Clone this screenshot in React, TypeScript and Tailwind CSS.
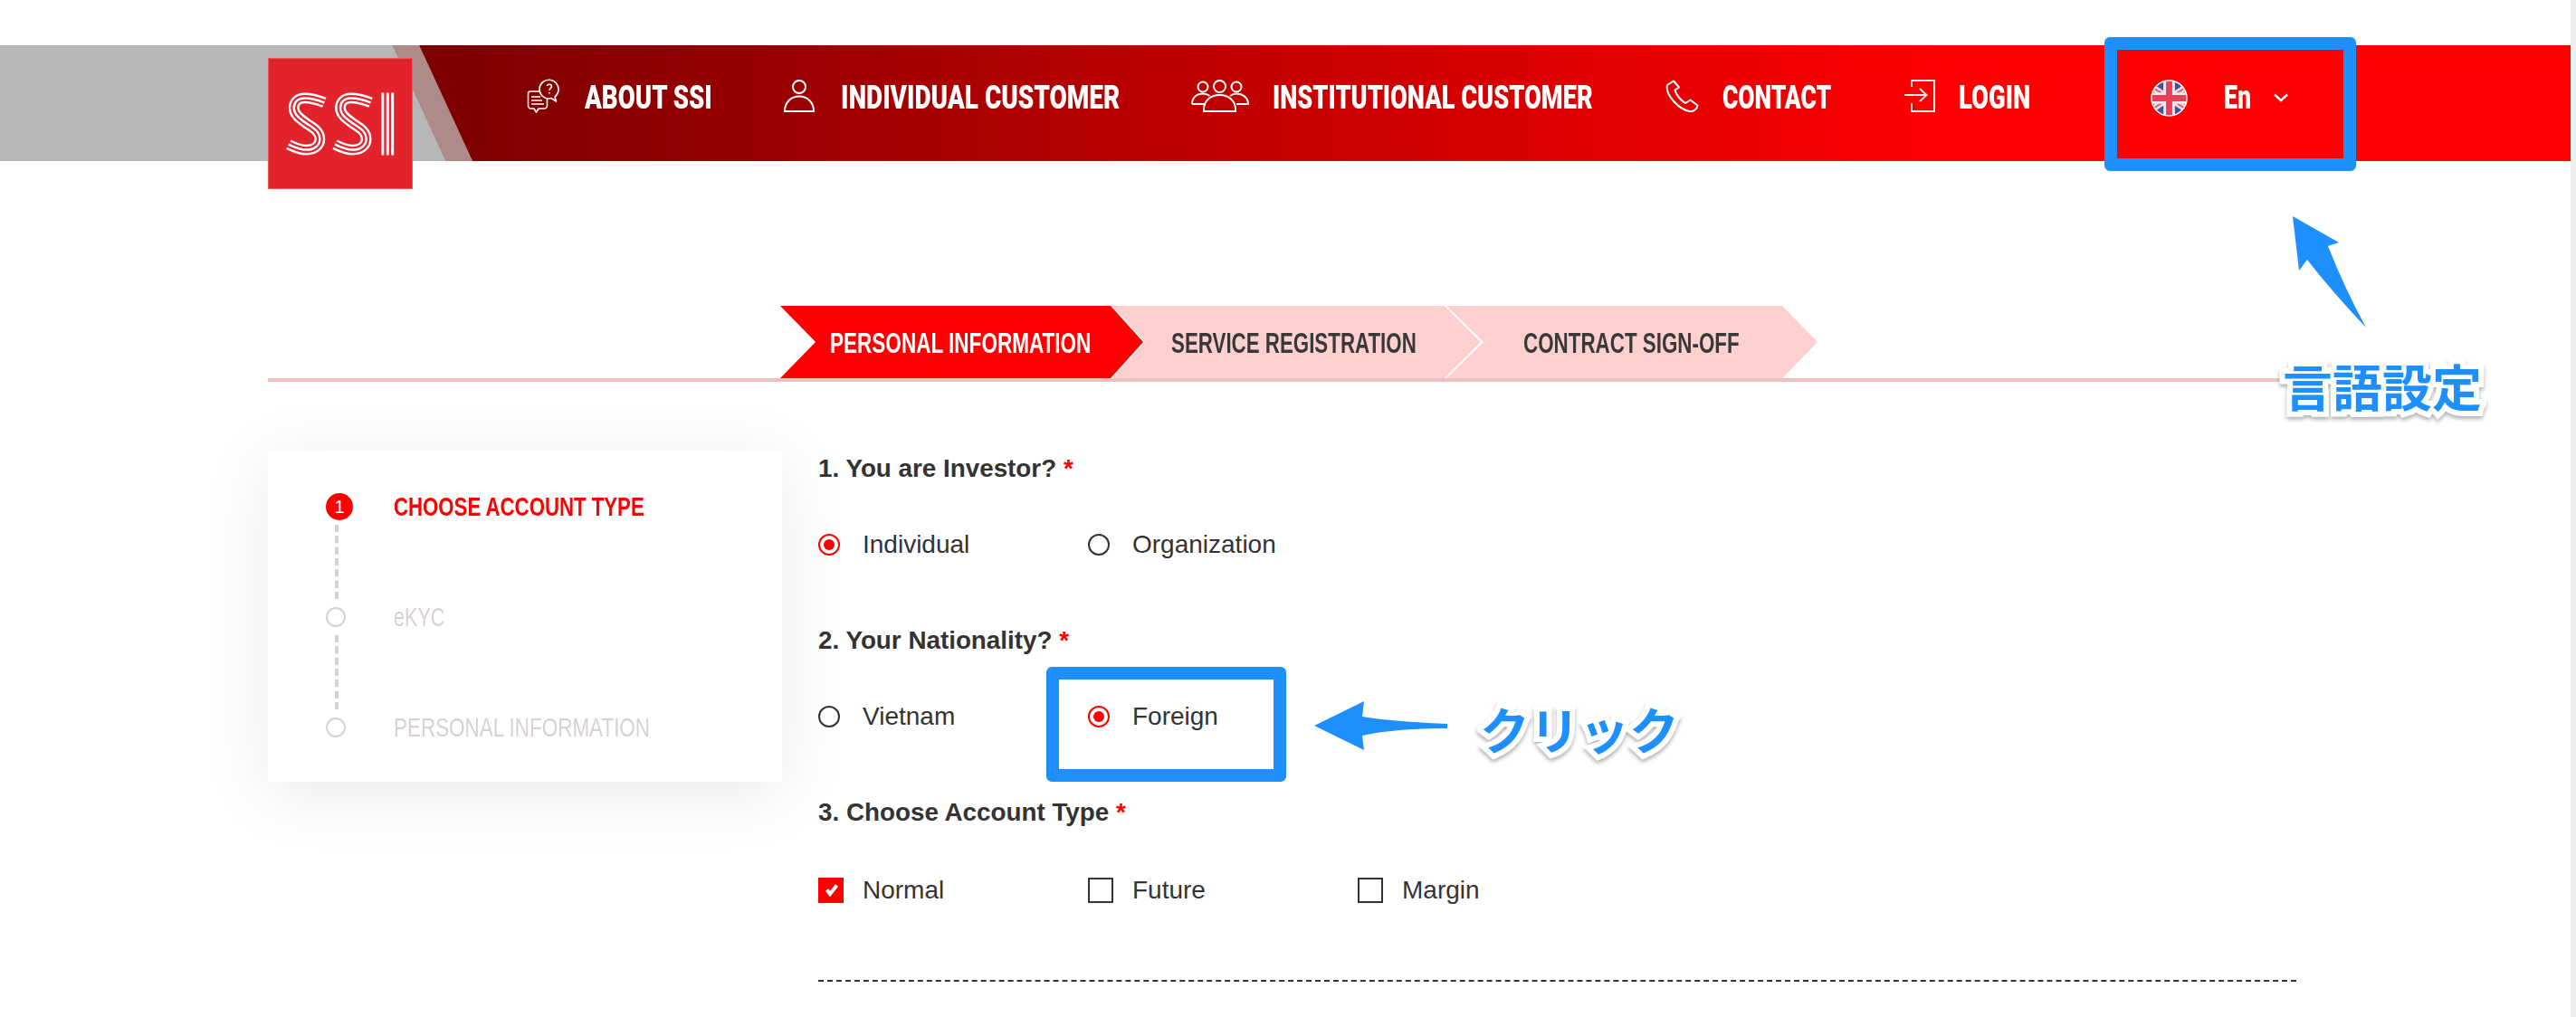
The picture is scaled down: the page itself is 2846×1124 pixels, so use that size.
import type { ReactNode } from "react";

const sans = "[font-family:'Liberation_Sans',Arial,sans-serif]";

function SsiLogo() {
  const s = "M62 49C52 45 44 44 40 44C32 44 28 49 28 55C28 63 36 68 43 73C51 78 57 82 57 90C57 97 51 102 42 102C35 102 28 99 22 96";
  return (
    <svg viewBox="0 0 160 145" className="h-full w-full" fill="none" strokeLinecap="butt">
      {[0, 52].map((dx) => (
        <g key={dx} transform={`translate(${dx} 0)`}>
          <path d={s} stroke="#fff" strokeWidth="12" />
          <path d={s} stroke="#e2232b" strokeWidth="7" />
          <path d={s} stroke="#fff" strokeWidth="2.5" />
        </g>
      ))}
      <path d="M127.5 38V108M133 38V108M138.5 38V108" stroke="#fff" strokeWidth="3" />
    </svg>
  );
}

function AboutIcon() {
  return (
    <svg viewBox="0 0 36 38" className="h-[38px] w-[36px]" fill="none" stroke="#fff" strokeWidth="1.6" strokeLinejoin="round">
      <path d="M17 19A10.5 10.5 0 1 1 31 20L32.5 25L27 21.5A10.5 10.5 0 0 1 17 19Z" />
      <path d="M22.5 8C22.7 5.5 27.5 5.5 27.5 8.500C27.5 10.500 25 10.500 25 13M25 15V16.500" />
      <path d="M14 14H4Q1.500 14 1.500 16.500V29Q1.500 33 5 33H8L10.500 37L13 33H19Q22.500 33 22.500 29V22" />
      <path d="M5 20H15M5 24H17M5 28H19" />
    </svg>
  );
}

function PersonIcon() {
  return (
    <svg viewBox="0 0 34 36" className="h-[36px] w-[34px]" fill="none" stroke="#fff" strokeWidth="2">
      <circle cx="17" cy="8" r="7" />
      <path d="M1 35C1 25 8 18.500 17 18.500C26 18.500 33 25 33 35Z" />
    </svg>
  );
}

function GroupIcon() {
  return (
    <svg viewBox="0 0 64 36" className="h-[36px] w-[64px]" fill="none" stroke="#fff" strokeWidth="2">
      <circle cx="31.500" cy="7.500" r="6.500" />
      <circle cx="13" cy="8" r="5.500" />
      <circle cx="50" cy="8" r="5.500" />
      <path d="M14 35V33C14 23 22 17 31.500 17C41 17 49 23 49 33V35Z" />
      <path d="M1 27C1 20 6 15.500 13 15.500C16 15.500 18.500 16.500 20.500 18M43 18C45 16.500 47 15.500 50 15.500C57 15.500 63 20 63 27H50" />
      <path d="M1 27H14" />
    </svg>
  );
}

function PhoneIcon() {
  return (
    <svg viewBox="0 0 37 36" className="h-[36px] w-[37px]" fill="none" stroke="#fff" strokeWidth="2" strokeLinejoin="round">
      <path d="M9 1.500L2 6C-0.500 16 14 33 27 35C31 35.500 35 32.500 35.500 28.500L27.500 22.500L22 26C17 23 11.500 16.500 10.500 11.500L15 8.500Z" />
    </svg>
  );
}

function LoginIcon() {
  return (
    <svg viewBox="0 0 36 36" className="h-[36px] w-[36px]" fill="none" stroke="#ffe4e4" strokeWidth="2">
      <path d="M8 8V1H33V35H8V26" />
      <path d="M0 17H24M17 10L24.500 17L17 24" />
    </svg>
  );
}

function FlagIcon() {
  return (
    <svg viewBox="0 0 42 42" className="h-[41px] w-[41px]">
      <defs>
        <clipPath id="flag-circle">
          <circle cx="21" cy="21" r="20" />
        </clipPath>
      </defs>
      <g clipPath="url(#flag-circle)">
        <rect width="42" height="42" fill="#46509f" />
        <path d="M-2 6L44 36M44 6L-2 36" stroke="#e9dfe6" strokeWidth="7" />
        <path d="M-2 6L44 36M44 6L-2 36" stroke="#e8566f" strokeWidth="2" />
        <path d="M21 0V42M0 21H42" stroke="#f0e6ea" strokeWidth="13" />
        <path d="M21 0V42M0 21H42" stroke="#ea3f5b" strokeWidth="7" />
      </g>
      <circle cx="21" cy="21" r="20" fill="none" stroke="#fff" strokeWidth="1.500" />
    </svg>
  );
}

function NavItem({ box, iconBox, icon, label, labelClass }: { box: string; iconBox: string; icon: ReactNode; label: string; labelClass: string }) {
  return (
    <div className={`flex items-center ${box}`}>
      <span className={`-mt-[4px] flex shrink-0 ${iconBox}`}>{icon}</span>
      <span className={`inline-block origin-left whitespace-nowrap font-black text-[36px] leading-none text-white [font-family:Roboto,sans-serif] ${labelClass}`}>
        {label}
      </span>
    </div>
  );
}

function Step({ pad, label, labelClass }: { pad: string; label: string; labelClass: string }) {
  return (
    <div className={`flex h-[80px] items-center pt-[2px] ${pad}`}>
      <span className={`inline-block origin-left whitespace-nowrap text-[31px] font-bold leading-none ${sans} ${labelClass}`}>{label}</span>
    </div>
  );
}

function Question({ children }: { children: ReactNode }) {
  return (
    <div className="h-[30px] text-[27.8px] font-bold leading-[30px] text-[#333]">
      {children} <span className="text-[#f00]">*</span>
    </div>
  );
}

function Radio({ label, checked = false }: { label: string; checked?: boolean }) {
  return (
    <div className="flex w-[298px] items-center">
      <span className={`mr-[25px] flex h-[24px] w-[24px] items-center justify-center rounded-full border-2 ${checked ? "border-[#f00]" : "border-[#333]"}`}>
        {checked && <span className="h-[12px] w-[12px] rounded-full bg-[#f00]" />}
      </span>
      <span className="text-[28px] leading-[30px] text-[#333]">{label}</span>
    </div>
  );
}

function Check({ label, checked = false }: { label: string; checked?: boolean }) {
  return (
    <div className="flex w-[298px] items-center">
      <span className={`mr-[21px] flex h-[28px] w-[28px] items-center justify-center border-2 ${checked ? "border-[#f00] bg-[#f00]" : "border-[#333]"}`}>
        {checked && (
          <svg viewBox="2 2 24 24" className="h-[24px] w-[24px]" fill="none" stroke="#fff" strokeWidth="4">
            <path d="M9.500 13.500L13 18L20.500 8.500" />
          </svg>
        )}
      </span>
      <span className="text-[28px] leading-[30px] text-[#333]">{label}</span>
    </div>
  );
}

function SideStep({ active = false, label, labelClass }: { active?: boolean; label: string; labelClass: string }) {
  return (
    <div className="flex h-[30px] items-center">
      <span className="flex w-[75px] shrink-0">
        {active ? (
          <span className={`flex h-[30px] w-[30px] items-center justify-center rounded-full bg-[#f00] text-[20px] text-white ${sans}`}>1</span>
        ) : (
          <span className="h-[22px] w-[22px] rounded-full border-2 border-[#d9d0d2]" />
        )}
      </span>
      <span className={`inline-block origin-left whitespace-nowrap text-[30px] leading-none ${sans} ${labelClass}`}>{label}</span>
    </div>
  );
}

function Connector() {
  return (
    <div className="h-[92px] py-[5px] pl-[10px]">
      <div className="h-full border-l-4 border-dashed border-[#d9d0d2]" />
    </div>
  );
}

const calloutText =
  "font-bold leading-none text-[#1e8fff] [font-family:'Noto_Sans_CJK_JP',sans-serif] text-[55px] [-webkit-text-stroke:12px_#fff] [paint-order:stroke_fill] drop-shadow-[0_3px_2px_rgba(0,0,0,0.3)]";

export default function App() {
  return (
    <div className={`relative flex h-[1124px] w-[2846px] overflow-hidden bg-white ${sans}`}>
      <main className="w-[2840px] pt-[50px]">
        <header className="relative flex h-[128px]">
          <div className="absolute inset-y-0 left-0 w-[492px] bg-[#b7b7b7] [clip-path:polygon(0_0,433px_0,100%_100%,0_100%)]" />
          <div className="absolute inset-y-0 left-[433px] w-[89px] bg-[#ae8a88] [clip-path:polygon(0_0,30px_0,100%_100%,59px_100%)]" />
          <div className="absolute inset-y-0 left-[463px] right-0 bg-[linear-gradient(90deg,#7f0000_2%,#ff0000_71%)] [clip-path:polygon(0_0,100%_0,100%_100%,59px_100%)]" />

          <div className="relative ml-[296px] mt-[14px] h-[145px] w-[160px] border border-[#ee5a60] bg-[#e2232b]">
            <SsiLogo />
          </div>

          <nav className="relative ml-[126px] flex h-[116px] items-center">
            <NavItem box="w-[284px]" iconBox="w-[64px]" icon={<AboutIcon />} label="ABOUT SSI" labelClass="scale-x-[0.768]" />
            <NavItem box="w-[450px]" iconBox="w-[63px]" icon={<PersonIcon />} label="INDIVIDUAL CUSTOMER" labelClass="scale-x-[0.776]" />
            <NavItem box="w-[524px]" iconBox="w-[90px]" icon={<GroupIcon />} label="INSTITUTIONAL CUSTOMER" labelClass="scale-x-[0.756]" />
            <NavItem box="w-[264px]" iconBox="w-[63px]" icon={<PhoneIcon />} label="CONTACT" labelClass="scale-x-[0.733]" />
            <NavItem box="w-[272px]" iconBox="w-[60px]" icon={<LoginIcon />} label="LOGIN" labelClass="scale-x-[0.763]" />
            <div className="flex items-center">
              <span className="mr-[40px] flex">
                <FlagIcon />
              </span>
              <span className="mr-[25px] w-[30px] origin-left scale-x-[0.74] text-[36px] font-black leading-none text-white [font-family:Roboto,sans-serif]">En</span>
              <svg viewBox="0 0 16 10" className="h-[10px] w-[16px]" fill="none" stroke="#fff" strokeWidth="2.500">
                <path d="M1 1.500L8 8L15 1.500" />
              </svg>
            </div>
          </nav>
        </header>

        <section className="ml-[296px] mt-[160px] w-[2244px] border-b-4 border-[#eebfc0] pl-[566px]">
          <div className="flex">
            <div className="relative z-10 w-[401px] bg-[#f00] [clip-path:polygon(0_0,365px_0,100%_50%,365px_100%,0_100%,39px_50%)]">
              <Step pad="pl-[55px]" label="PERSONAL INFORMATION" labelClass="text-white scale-x-[0.727]" />
            </div>
            <div className="-ml-[34px] w-[407px] bg-[#fecfcf] [clip-path:polygon(0_0,367px_0,100%_50%,367px_100%,0_100%,36px_50%)]">
              <Step pad="pl-[65px]" label="SERVICE REGISTRATION" labelClass="text-[#383838] scale-x-[0.72]" />
            </div>
            <div className="-ml-[38px] w-[410px] bg-[#fecfcf] [clip-path:polygon(0_0,371px_0,100%_50%,371px_100%,0_100%,41px_50%)]">
              <Step pad="pl-[85px]" label="CONTRACT SIGN-OFF" labelClass="text-[#383838] scale-x-[0.722]" />
            </div>
          </div>
        </section>

        <div className="ml-[296px] mt-[76px] flex">
          <aside className="h-[366px] w-[568px] bg-white pl-[64px] pt-[47px] shadow-[0_12px_70px_rgba(0,0,0,0.09)]">
            <SideStep active label="CHOOSE ACCOUNT TYPE" labelClass="font-bold text-[#f00] scale-x-[0.74]" />
            <Connector />
            <SideStep label="eKYC" labelClass="text-[#d9d0d2] scale-x-[0.72]" />
            <Connector />
            <SideStep label="PERSONAL INFORMATION" labelClass="text-[#d9d0d2] scale-x-[0.748]" />
          </aside>

          <div className="ml-[40px] w-[1633px] pt-[5px]">
            <Question>1. You are Investor?</Question>
            <div className="mt-[54px] flex h-[30px]">
              <Radio label="Individual" checked />
              <Radio label="Organization" />
            </div>
            <div className="mt-[76px]">
              <Question>2. Your Nationality?</Question>
            </div>
            <div className="mt-[54px] flex h-[30px]">
              <Radio label="Vietnam" />
              <Radio label="Foreign" checked />
            </div>
            <div className="mt-[76px]">
              <Question>3. Choose Account Type</Question>
            </div>
            <div className="mt-[56px] flex h-[30px]">
              <Check label="Normal" checked />
              <Check label="Future" />
              <Check label="Margin" />
            </div>
            <div className="mt-[84px] border-t-2 border-dashed border-[#333]" />
          </div>
        </div>
      </main>
      <div className="h-full w-[6px] bg-[#eeeeee]" />

      {/* callouts pasted over the screenshot */}
      <div className="absolute left-[2325px] top-[41px] h-[148px] w-[278px] rounded-[6px] border-[14px] border-[#1e8fff]" />
      <div className="absolute left-[1156px] top-[737px] h-[127px] w-[265px] rounded-[6px] border-[14px] border-[#1e8fff]" />
      <svg className="absolute left-[2525px] top-[235px] h-[130px] w-[95px]" viewBox="0 0 95 130">
        <path d="M8 4L59 33L47 37Q66 85 89 127Q52 88 24 52L15 64Z" fill="#1e8fff" />
      </svg>
      <svg className="absolute left-[1448px] top-[770px] h-[64px] w-[156px]" viewBox="0 0 156 64">
        <path d="M4 32L59 5L57 22C80 26 110 28 151 30V35C110 35 80 38 57 43L59 59Z" fill="#1e8fff" />
      </svg>
      <div className={`absolute left-[2522px] top-[398px] ${calloutText}`}>言語設定</div>
      <div className={`absolute left-[1635px] top-[777px] ${calloutText}`}>クリック</div>
    </div>
  );
}
